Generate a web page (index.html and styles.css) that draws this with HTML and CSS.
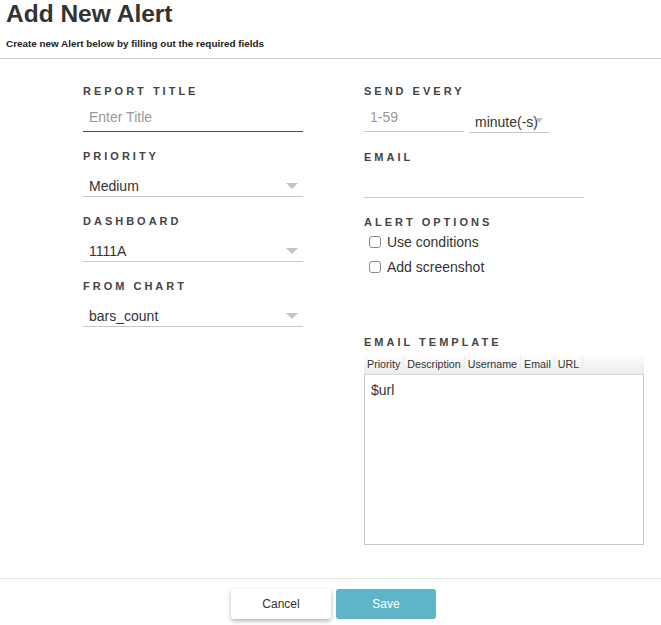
FILE: index.html
```html
<!DOCTYPE html>
<html>
<head>
<meta charset="utf-8">
<link rel="stylesheet" href="styles.css">
</head>
<body>
<header class="head">
  <h1 class="title">Add New Alert</h1>
  <p class="subtitle">Create new Alert below by filling out the required fields</p>
</header>
<main class="form">
  <div class="col">
    <div class="field">
      <div class="label">REPORT TITLE</div>
      <div class="control input error"><span class="ph">Enter Title</span></div>
    </div>
    <div class="field">
      <div class="label">PRIORITY</div>
      <div class="control select"><span class="val">Medium</span><i class="arrow"></i></div>
    </div>
    <div class="field">
      <div class="label">DASHBOARD</div>
      <div class="control select"><span class="val">1111A</span><i class="arrow"></i></div>
    </div>
    <div class="field">
      <div class="label">FROM CHART</div>
      <div class="control select"><span class="val">bars_count</span><i class="arrow"></i></div>
    </div>
  </div>
  <div class="col right">
    <div class="field">
      <div class="label">SEND EVERY</div>
      <div class="row">
        <div class="control input num"><span class="ph">1-59</span></div>
        <div class="control unit"><span>minute(-s)</span><i class="arrow small"></i></div>
      </div>
    </div>
    <div class="field">
      <div class="label">EMAIL</div>
      <div class="control input email"></div>
    </div>
    <div class="field options">
      <div class="label">ALERT OPTIONS</div>
      <label class="check"><span class="box"></span>Use conditions</label>
      <label class="check"><span class="box"></span>Add screenshot</label>
    </div>
    <div class="field template">
      <div class="label">EMAIL TEMPLATE</div>
      <div class="toolbar">
        <span class="tool">Priority</span><span class="tool">Description</span><span class="tool">Username</span><span class="tool">Email</span><span class="tool">URL</span>
      </div>
      <div class="editor">$url</div>
    </div>
  </div>
</main>
<footer class="foot">
  <button class="btn cancel">Cancel</button>
  <button class="btn save">Save</button>
</footer>
</body>
</html>
```

FILE: styles.css
```css
* { box-sizing: border-box; }
html, body { margin: 0; padding: 0; background: #fff; }
body {
  font-family: "Liberation Sans", Arial, sans-serif;
  color: #333;
  width: 661px;
  height: 625px;
  overflow: hidden;
}
.head {
  padding: 0 6px;
  height: 59px;
  border-bottom: 1px solid #c8c8c8;
}
.title {
  margin: 0;
  font-size: 24.5px;
  line-height: 28px;
  font-weight: bold;
  color: #333;
}
.subtitle {
  margin: 9px 0 0;
  font-size: 9.9px;
  line-height: 14px;
  font-weight: bold;
  color: #222;
}
.form {
  display: flex;
  gap: 61px;
  padding: 25px 0 0 83px;
  height: 519px;
}
.col { width: 220px; }
.right { width: 280px; }
.field { margin-bottom: 17px; }
.label {
  font-size: 11px;
  line-height: 14px;
  font-weight: bold;
  letter-spacing: 3px;
  color: #444;
}
.control {
  position: relative;
  margin-top: 6px;
  height: 28px;
  border-bottom: 1px solid #c8c8c8;
  font-size: 14px;
  line-height: 16px;
  padding: 5px 0 0 6px;
  color: #333;
}
.control.error { border-bottom: 1px solid #ff0000; }
.select { padding-top: 9px; }
.val {
  display: block;
  line-height: 16px;
}
.ph { color: #999; }
.arrow {
  position: absolute;
  right: 5px;
  top: 14px;
  width: 0;
  height: 0;
  border-left: 6px solid transparent;
  border-right: 6px solid transparent;
  border-top: 6px solid #c4c4c4;
}
.arrow.small {
  right: 6px;
  top: 14px;
  border-left-width: 4px;
  border-right-width: 4px;
  border-top-width: 5px;
}
.row { display: flex; gap: 5px; align-items: flex-start; }
.num { width: 100px; }
.unit {
  width: 80px;
  height: 29px;
  padding: 10px 0 0 6px;
}
.email { width: 220px; margin-top: 7px; height: 27px; }
.options { margin-bottom: 0; height: 120px; }
.check {
  display: flex;
  align-items: center;
  font-size: 14px;
  line-height: 16px;
  color: #333;
  margin: 5px 0 0 5px;
  height: 16px;
}
.check + .check { margin-top: 9px; }
.box {
  width: 12px;
  height: 12px;
  border: 1px solid #8a8a8a;
  border-radius: 3px;
  margin-right: 6px;
  background: #fff;
}
.template .label { margin-bottom: 6px; }
.toolbar {
  display: flex;
  height: 20px;
  width: 280px;
  background: linear-gradient(#fdfdfd, #ececec);
  border-bottom: 1px solid #d8d8d8;
  font-size: 10.7px;
  line-height: 19px;
  color: #333;
}
.tool {
  padding: 0 3px;
  border-right: 1px solid #ececec;
}
.editor {
  width: 280px;
  height: 170px;
  border: 1px solid #c8c8c8;
  border-top: none;
  padding: 5px 6px;
  font-size: 14px;
  line-height: 20px;
  color: #333;
}
.foot {
  border-top: 1px solid #e6e6e6;
  display: flex;
  justify-content: center;
  gap: 5px;
  padding: 10px 0 0 6px;
}
.btn {
  width: 100px;
  height: 30px;
  border: none;
  border-radius: 3px;
  font-family: "Liberation Sans", Arial, sans-serif;
  font-size: 12px;
}
.cancel {
  background: #fff;
  color: #333;
  box-shadow: 0 2px 4px rgba(0,0,0,0.3);
}
.save {
  background: #5cb6c8;
  color: #fff;
}
```
